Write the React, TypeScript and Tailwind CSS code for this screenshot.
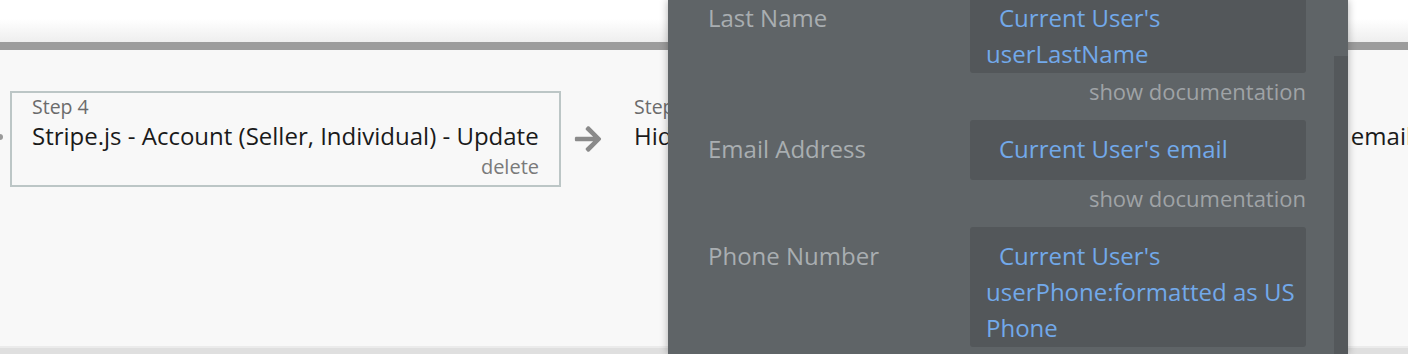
/* Workflow editor — step cards with the property panel overlaid on the right */
import { FaArrowRight } from 'react-icons/fa';

const font = { fontFamily: '"Open Sans", "Noto Sans", sans-serif' };

type Field = { label: string; lines: string[] };

const fields: Field[] = [
  { label: 'Last Name', lines: ["Current User's", 'userLastName'] },
  { label: 'Email Address', lines: ["Current User's email"] },
  { label: 'Phone Number', lines: ["Current User's", 'userPhone:formatted as US', 'Phone'] },
];

function FieldRow({ field, last }: { field: Field; last?: boolean }) {
  return (
    <div className="flex">
      <div className="w-[262px] shrink-0 pt-[11px] text-[24px] leading-[36px] text-[#a9aeb1]">{field.label}</div>
      <div className="w-[336px] shrink-0">
        <div className="min-h-[60px] rounded-[3px] bg-[#53575a] pb-[1px] pl-[16px] pr-[8px] pt-[11px] text-[24px] leading-[36px] text-[#72a9ea]">
          {field.lines.map((l, i) => (
            <div key={i} className={i === 0 ? 'indent-[13px]' : ''}>{l}</div>
          ))}
        </div>
        {!last && (
          <div className="h-[47px] text-right text-[22px] leading-[37px] text-[#9fa3a6]">show documentation</div>
        )}
      </div>
    </div>
  );
}

export default function App() {
  return (
    <div className="relative h-[354px] w-full overflow-hidden bg-[#f8f8f8]" style={font}>
      {/* top header strip */}
      <div className="h-[42px] bg-[linear-gradient(to_bottom,#ffffff_45%,#eeeeee)]" />
      <div className="h-[8px] bg-[#9c9c9c]" />

      {/* canvas with step cards */}
      <div className="relative flex h-[296px] items-start pl-[10px] pt-[41px] whitespace-nowrap">
        <div className="absolute left-0 top-[84px] h-[6px] w-[3px] rounded-r-full bg-[#9a9a9a]" />
        <div className="flex h-[96px] w-[551px] shrink-0 flex-col border-2 border-[#bcc6c6] pl-[20px] pr-[20px]">
          <div className="text-[19.5px] leading-[28px] text-[#6b6b6b]">Step 4</div>
          <div className="text-[24px] leading-[30px] text-[#1a1a1a]">Stripe.js - Account (Seller, Individual) - Update</div>
          <div className="text-right text-[20px] leading-[32px] text-[#7a7a7a]">delete</div>
        </div>
        <div className="flex h-[96px] w-[73px] shrink-0 items-center pl-[11px]">
          <FaArrowRight className="h-[30px] w-[32px] text-[#8a8a8a]" />
        </div>
        <div className="flex shrink-0 flex-col pt-[2px]">
          <div className="text-[19.5px] leading-[28px] text-[#6b6b6b]">Step 5</div>
          <div className="flex w-[778px] justify-between text-[24px] leading-[30px] text-[#1a1a1a]">
            <span>Hide Group Payout Details</span>
            <span>email</span>
          </div>
        </div>
      </div>
      <div className="h-[2px] bg-[#ebebeb]" />
      <div className="h-[6px] bg-[#dfdfdf]" />

      {/* property panel overlay */}
      <div className="absolute left-[668px] top-0 h-full w-[680px] bg-[#5f6467] shadow-[0_0_8px_rgba(0,0,0,0.3)]">
        <div className="-mt-[11px] pl-[40px]">
          {fields.map((f, i) => (
            <FieldRow key={f.label} field={f} last={i === fields.length - 1} />
          ))}
        </div>
        <div className="absolute bottom-0 right-0 top-[56px] w-[14px] bg-[#54585b]" />
      </div>
    </div>
  );
}
